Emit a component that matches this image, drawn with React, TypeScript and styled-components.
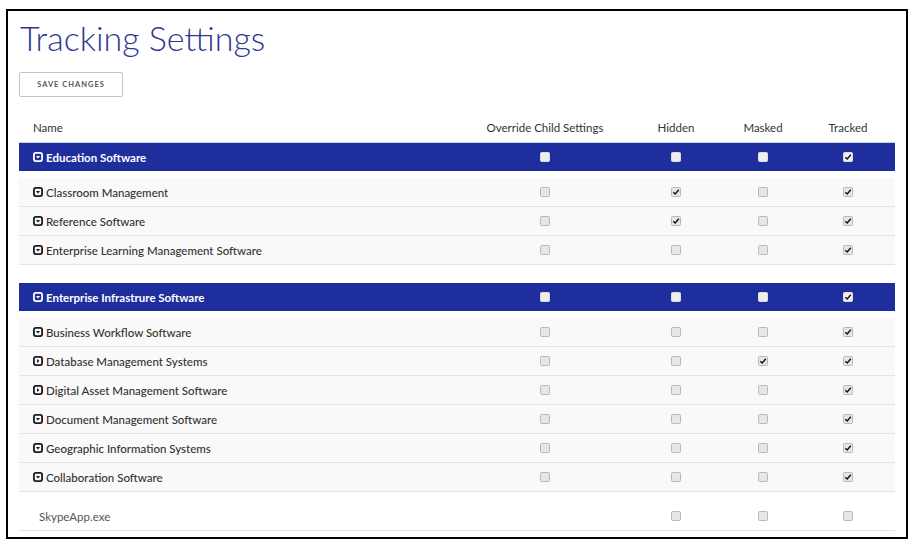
import React from "react";
import styled, { createGlobalStyle } from "styled-components";

const Global = createGlobalStyle`
  html, body { margin: 0; padding: 0; background: #fff; }
  body { font-family: Lato, "Open Sans", sans-serif; color: #333; }
`;

const Frame = styled.div`
  margin: 9px 0 0 6px;
  width: 902px;
  height: 530px;
  box-sizing: border-box;
  border: 2px solid #000;
  padding: 0 11px;
`;

const Title = styled.h1`
  margin: 0;
  padding: 5px 0 0 1px;
  font-family: Lato, sans-serif;
  font-weight: 300;
  font-size: 34px;
  line-height: 44px;
  color: #2e3893;
  letter-spacing: 0;
`;

const SaveButton = styled.button`
  display: block;
  margin-top: 12px;
  width: 104px;
  height: 25px;
  border: 1px solid #c4c4c4;
  border-radius: 2px;
  background: #fff;
  font-family: Lato, sans-serif;
  font-size: 7.5px;
  font-weight: 700;
  letter-spacing: 1px;
  color: #555;
  padding: 0;
`;

const Table = styled.div`
  margin-top: 16px;
  display: flex;
  flex-direction: column;
`;

const cols = `1fr 164px 98px 76px 94px`;

const HeadRow = styled.div`
  display: grid;
  grid-template-columns: ${cols};
  height: 29px;
  align-items: center;
  border-bottom: 1px solid #cfd3ea;
  font-size: 11.5px;
  color: #333;
`;

const HeadCell = styled.div<{ $left?: boolean }>`
  text-align: ${(p) => (p.$left ? "left" : "center")};
  padding-left: ${(p) => (p.$left ? "14px" : "0")};
`;

const Group = styled.div`
  display: flex;
  flex-direction: column;
  & + & { margin-top: 18px; }
`;

const Band = styled.div`
  display: grid;
  grid-template-columns: ${cols};
  height: 28px;
  align-items: center;
  background: #1f2e9d;
  color: #fff;
  font-size: 11.5px;
  font-weight: 700;
  margin-bottom: 7px;
`;

const Row = styled.div<{ $plain?: boolean }>`
  display: grid;
  grid-template-columns: ${cols};
  height: 29px;
  box-sizing: border-box;
  align-items: center;
  background: ${(p) => (p.$plain ? "#fff" : "#f9f9f9")};
  border-bottom: 1px solid #e4e4e4;
  font-size: 11.5px;
  font-weight: 500;
  color: #333;
`;

const PlainRow = styled(Row)`
  margin-top: 8px;
  height: 31px;
  padding-top: 2px;
`;

const NameCell = styled.div<{ $indent?: number }>`
  display: flex;
  align-items: center;
  gap: 3px;
  padding-left: ${(p) => p.$indent ?? 14}px;
  white-space: nowrap;
`;

const FileName = styled.span`
  font-weight: 400;
  color: #555;
`;

const BoxCell = styled.div`
  display: flex;
  justify-content: center;
  align-items: center;
`;

const Box = styled.span<{ $band?: boolean }>`
  display: inline-flex;
  align-items: center;
  justify-content: center;
  width: 8px;
  height: 8px;
  border-radius: 1.5px;
  border: 1px solid ${(p) => (p.$band ? "#ddd" : "#b9b9b9")};
  background: ${(p) => (p.$band ? "#eeeeee" : "#e6e6e6")};
`;

const Toggle = ({ open, light }: { open: boolean; light?: boolean }) => {
  const fg = light ? "#fff" : "#1c1c1c";
  return (
    <svg width="10" height="10" viewBox="0 0 10 10" style={{ flex: "none" }}>
      <rect x="0.9" y="0.9" width="8.2" height="8.2" rx="2" fill="none" stroke={fg} strokeWidth="1.8" />
      {open ? (
        <path d="M2.9 4 L7.1 4 L5 6.4 Z" fill={fg} />
      ) : (
        <path d="M4 2.9 L6.4 5 L4 7.1 Z" fill={fg} />
      )}
    </svg>
  );
};

const Check = ({ on, band }: { on: boolean; band?: boolean }) => (
  <Box $band={band}>
    {on && (
      <svg width="8" height="8" viewBox="0 0 8 8">
        <path d="M1.3 4.2 L3.2 6 L6.8 1.8" stroke="#111" strokeWidth="1.4" fill="none" />
      </svg>
    )}
  </Box>
);

type Item = { name: string; open: boolean; c: boolean[] };
type G = { name: string; c: boolean[]; items: Item[] };

const groups: G[] = [
  {
    name: "Education Software",
    c: [false, false, false, true],
    items: [
      { name: "Classroom Management", open: true, c: [false, true, false, true] },
      { name: "Reference Software", open: true, c: [false, true, false, true] },
      { name: "Enterprise Learning Management Software", open: true, c: [false, false, false, true] },
    ],
  },
  {
    name: "Enterprise Infrastrure Software",
    c: [false, false, false, true],
    items: [
      { name: "Business Workflow Software", open: true, c: [false, false, false, true] },
      { name: "Database Management Systems", open: false, c: [false, false, true, true] },
      { name: "Digital Asset Management Software", open: false, c: [false, false, false, true] },
      { name: "Document Management Software", open: true, c: [false, false, false, true] },
      { name: "Geographic Information Systems", open: true, c: [false, false, false, true] },
      { name: "Collaboration Software", open: true, c: [false, false, false, true] },
    ],
  },
];

export default function App() {
  return (
    <>
      <Global />
      <Frame>
        <Title>Tracking Settings</Title>
        <SaveButton>SAVE CHANGES</SaveButton>
        <Table>
          <HeadRow>
            <HeadCell $left>Name</HeadCell>
            <HeadCell>Override Child Settings</HeadCell>
            <HeadCell>Hidden</HeadCell>
            <HeadCell>Masked</HeadCell>
            <HeadCell>Tracked</HeadCell>
          </HeadRow>
          {groups.map((g) => (
            <Group key={g.name}>
              <Band>
                <NameCell>
                  <Toggle open light />
                  {g.name}
                </NameCell>
                {g.c.map((v, i) => (
                  <BoxCell key={i}>
                    <Check on={v} band />
                  </BoxCell>
                ))}
              </Band>
              {g.items.map((it) => (
                <Row key={it.name}>
                  <NameCell>
                    <Toggle open={it.open} />
                    {it.name}
                  </NameCell>
                  {it.c.map((v, i) => (
                    <BoxCell key={i}>
                      <Check on={v} />
                    </BoxCell>
                  ))}
                </Row>
              ))}
            </Group>
          ))}
          <PlainRow $plain>
            <NameCell $indent={20}>
              <FileName>SkypeApp.exe</FileName>
            </NameCell>
            <BoxCell />
            <BoxCell>
              <Check on={false} />
            </BoxCell>
            <BoxCell>
              <Check on={false} />
            </BoxCell>
            <BoxCell>
              <Check on={false} />
            </BoxCell>
          </PlainRow>
        </Table>
      </Frame>
    </>
  );
}
